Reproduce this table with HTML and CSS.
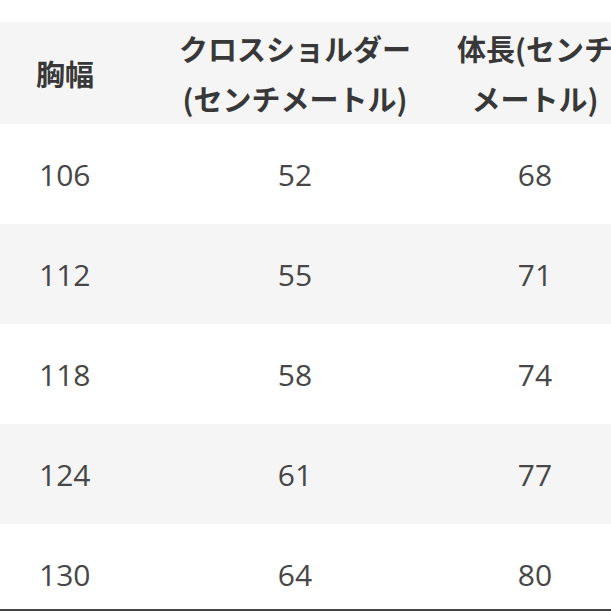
FILE: index.html
```html
<!DOCTYPE html>
<html lang="ja">
<head>
<meta charset="utf-8">
<link rel="stylesheet" href="styles.css">
</head>
<body>
<div class="frame">
  <div class="table">
    <div class="row head">
      <div class="cell c1">胸幅</div>
      <div class="cell c2">クロスショルダー<br>(センチメートル)</div>
      <div class="cell c3">体長(センチ<br>メートル)</div>
    </div>
    <div class="row">
      <div class="cell c1">106</div><div class="cell c2">52</div><div class="cell c3">68</div>
    </div>
    <div class="row alt">
      <div class="cell c1">112</div><div class="cell c2">55</div><div class="cell c3">71</div>
    </div>
    <div class="row">
      <div class="cell c1">118</div><div class="cell c2">58</div><div class="cell c3">74</div>
    </div>
    <div class="row alt">
      <div class="cell c1">124</div><div class="cell c2">61</div><div class="cell c3">77</div>
    </div>
    <div class="row">
      <div class="cell c1">130</div><div class="cell c2">64</div><div class="cell c3">80</div>
    </div>
  </div>
</div>
</body>
</html>
```
FILE: styles.css
```css
html, body {
  margin: 0;
  padding: 0;
  background: #ffffff;
  overflow: hidden;
}
.frame {
  width: 611px;
  height: 587px;
  overflow: hidden;
  border-bottom: 2px solid #454545;
  padding-top: 22px;
}
.table {
  width: 640px;
  font-family: "Open Sans", "Noto Sans CJK JP", sans-serif;
  color: #474747;
}
.row {
  display: grid;
  grid-template-columns: 150px 290px 190px;
  height: 100px;
  align-items: center;
  background: #ffffff;
}
.row.alt, .row.head {
  background: #f5f5f5;
}
.row.head {
  height: 102px;
  font-family: "Noto Sans CJK JP", sans-serif;
  font-weight: 700;
  line-height: 50px;
  color: #383838;
}
.cell {
  font-size: 30px;
  white-space: nowrap;
}
.head .cell {
  font-size: 29px;
}
.c1 {
  padding-left: 39px;
}
.head .c1 {
  padding-left: 36px;
}
.c2, .c3 {
  text-align: center;
}
```
